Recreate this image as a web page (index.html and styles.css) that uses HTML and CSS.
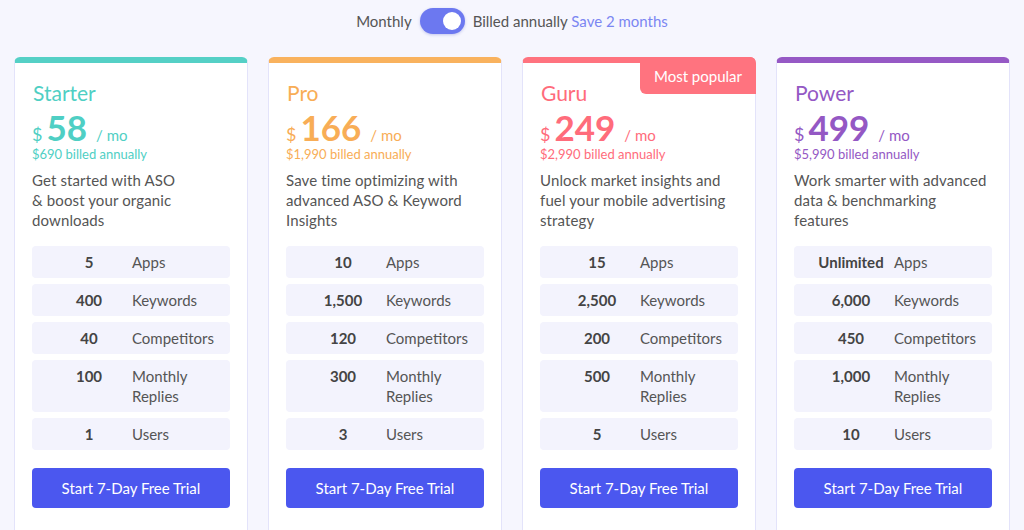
FILE: index.html
```html
<!DOCTYPE html>
<html lang="en">
  <head>
    <meta charset="UTF-8" />
    <meta name="viewport" content="width=device-width, initial-scale=1.0" />
    <title>Pricing</title>
    <link rel="stylesheet" href="styles.css">
  </head>
  <body>
    <div class="billing">
      <span>Monthly</span>
      <span class="toggle"><span class="knob"></span></span>
      <span>Billed annually <span class="save">Save 2 months</span></span>
    </div>

    <div class="plans">
      <!-- Starter -->
      <div class="plan starter">
        <h2 class="plan-name">Starter</h2>
        <div class="price"><span class="cur">$</span><span class="amount">58</span><span class="per">/ mo</span></div>
        <div class="annual">$690 billed annually</div>
        <p class="desc">Get started with ASO<br>&amp; boost your organic downloads</p>
        <ul class="features">
          <li><b>5</b><span>Apps</span></li>
          <li><b>400</b><span>Keywords</span></li>
          <li><b>40</b><span>Competitors</span></li>
          <li><b>100</b><span>Monthly<br>Replies</span></li>
          <li><b>1</b><span>Users</span></li>
        </ul>
        <button class="trial">Start 7-Day Free Trial</button>
      </div>

      <!-- Pro -->
      <div class="plan pro">
        <h2 class="plan-name">Pro</h2>
        <div class="price"><span class="cur">$</span><span class="amount">166</span><span class="per">/ mo</span></div>
        <div class="annual">$1,990 billed annually</div>
        <p class="desc">Save time optimizing with advanced ASO &amp; Keyword Insights</p>
        <ul class="features">
          <li><b>10</b><span>Apps</span></li>
          <li><b>1,500</b><span>Keywords</span></li>
          <li><b>120</b><span>Competitors</span></li>
          <li><b>300</b><span>Monthly<br>Replies</span></li>
          <li><b>3</b><span>Users</span></li>
        </ul>
        <button class="trial">Start 7-Day Free Trial</button>
      </div>

      <!-- Guru -->
      <div class="plan guru">
        <div class="badge">Most popular</div>
        <h2 class="plan-name">Guru</h2>
        <div class="price"><span class="cur">$</span><span class="amount">249</span><span class="per">/ mo</span></div>
        <div class="annual">$2,990 billed annually</div>
        <p class="desc">Unlock market insights and fuel your mobile advertising strategy</p>
        <ul class="features">
          <li><b>15</b><span>Apps</span></li>
          <li><b>2,500</b><span>Keywords</span></li>
          <li><b>200</b><span>Competitors</span></li>
          <li><b>500</b><span>Monthly<br>Replies</span></li>
          <li><b>5</b><span>Users</span></li>
        </ul>
        <button class="trial">Start 7-Day Free Trial</button>
      </div>

      <!-- Power -->
      <div class="plan power">
        <h2 class="plan-name">Power</h2>
        <div class="price"><span class="cur">$</span><span class="amount">499</span><span class="per">/ mo</span></div>
        <div class="annual">$5,990 billed annually</div>
        <p class="desc">Work smarter with advanced data &amp; benchmarking features</p>
        <ul class="features">
          <li><b>Unlimited</b><span>Apps</span></li>
          <li><b>6,000</b><span>Keywords</span></li>
          <li><b>450</b><span>Competitors</span></li>
          <li><b>1,000</b><span>Monthly<br>Replies</span></li>
          <li><b>10</b><span>Users</span></li>
        </ul>
        <button class="trial">Start 7-Day Free Trial</button>
      </div>
    </div>
  </body>
</html>
```

FILE: styles.css
```css
body {
  margin: 0;
  background-color: #f6f6fe;
  font-family: Lato, "Open Sans", sans-serif;
  color: #555;
}

/* billing switch */
.billing {
  display: flex;
  justify-content: center;
  align-items: center;
  gap: 8px;
  padding-top: 8px;
  height: 26px;
  font-size: 15px;
  color: #555;
}
.save {
  color: #7b86f2;
}
.toggle {
  position: relative;
  width: 45px;
  height: 26px;
  border-radius: 13px;
  background-color: #6c78f0;
  box-shadow: 0 1px 3px rgba(80, 90, 200, 0.3);
}
.knob {
  position: absolute;
  right: 4px;
  top: 4px;
  width: 18px;
  height: 18px;
  border-radius: 50%;
  background-color: white;
}

/* plans */
.plans {
  display: grid;
  grid-template-columns: repeat(4, 234px);
  gap: 20px;
  justify-content: center;
  margin-top: 23px;
}
.plan {
  position: relative;
  background-color: white;
  border: 1px solid #e3e3fa;
  border-top: 6px solid;
  border-radius: 6px;
  padding: 17px 17px 40px;
}
.starter { border-top-color: #55d0c6; --accent: #4fcfc4; }
.pro { border-top-color: #f9b25e; --accent: #f8ad56; }
.guru { border-top-color: #ff737f; --accent: #ff6c7b; }
.power { border-top-color: #9659c5; --accent: #9458c4; }

.badge {
  position: absolute;
  top: -6px;
  right: -1px;
  background-color: #ff737f;
  color: white;
  font-size: 15px;
  line-height: 20px;
  padding: 9px 14px 8px;
  border-radius: 0 6px 0 6px;
}

.plan-name {
  margin: 0 0 0 1px;
  font-size: 21px;
  font-weight: 400;
  line-height: 26px;
  color: var(--accent);
}
.price {
  display: flex;
  align-items: baseline;
  padding-top: 2px;
  height: 38px;
  line-height: 38px;
  color: var(--accent);
}
.cur {
  font-size: 18px;
  margin-right: 4px;
}
.amount {
  font-size: 35px;
  font-weight: 700;
  margin-right: 9px;
}
.per {
  font-size: 15px;
}
.annual {
  font-size: 13px;
  line-height: 16px;
  color: var(--accent);
}
.desc {
  margin: 8px 0 0;
  font-size: 15px;
  line-height: 20px;
  letter-spacing: 0.12px;
  color: #555;
}

.features {
  list-style: none;
  margin: 16px 0 0;
  padding: 0;
  display: flex;
  flex-direction: column;
  gap: 6px;
}
.features li {
  display: grid;
  grid-template-columns: 80px 1fr;
  gap: 3px;
  align-items: center;
  padding: 6px 0 6px 17px;
  min-height: 20px;
  background-color: #f3f3fd;
  border-radius: 4px;
  font-size: 15px;
  line-height: 20px;
}
.features b {
  text-align: center;
  color: #444;
  align-self: start;
}
.features span {
  color: #555;
}

.trial {
  display: block;
  width: 100%;
  margin-top: 18px;
  height: 40px;
  border: none;
  border-radius: 4px;
  background-color: #4b57ef;
  color: white;
  font-family: inherit;
  font-size: 15px;
  cursor: pointer;
}
.trial:hover {
  background-color: #3b46d8;
}
```
